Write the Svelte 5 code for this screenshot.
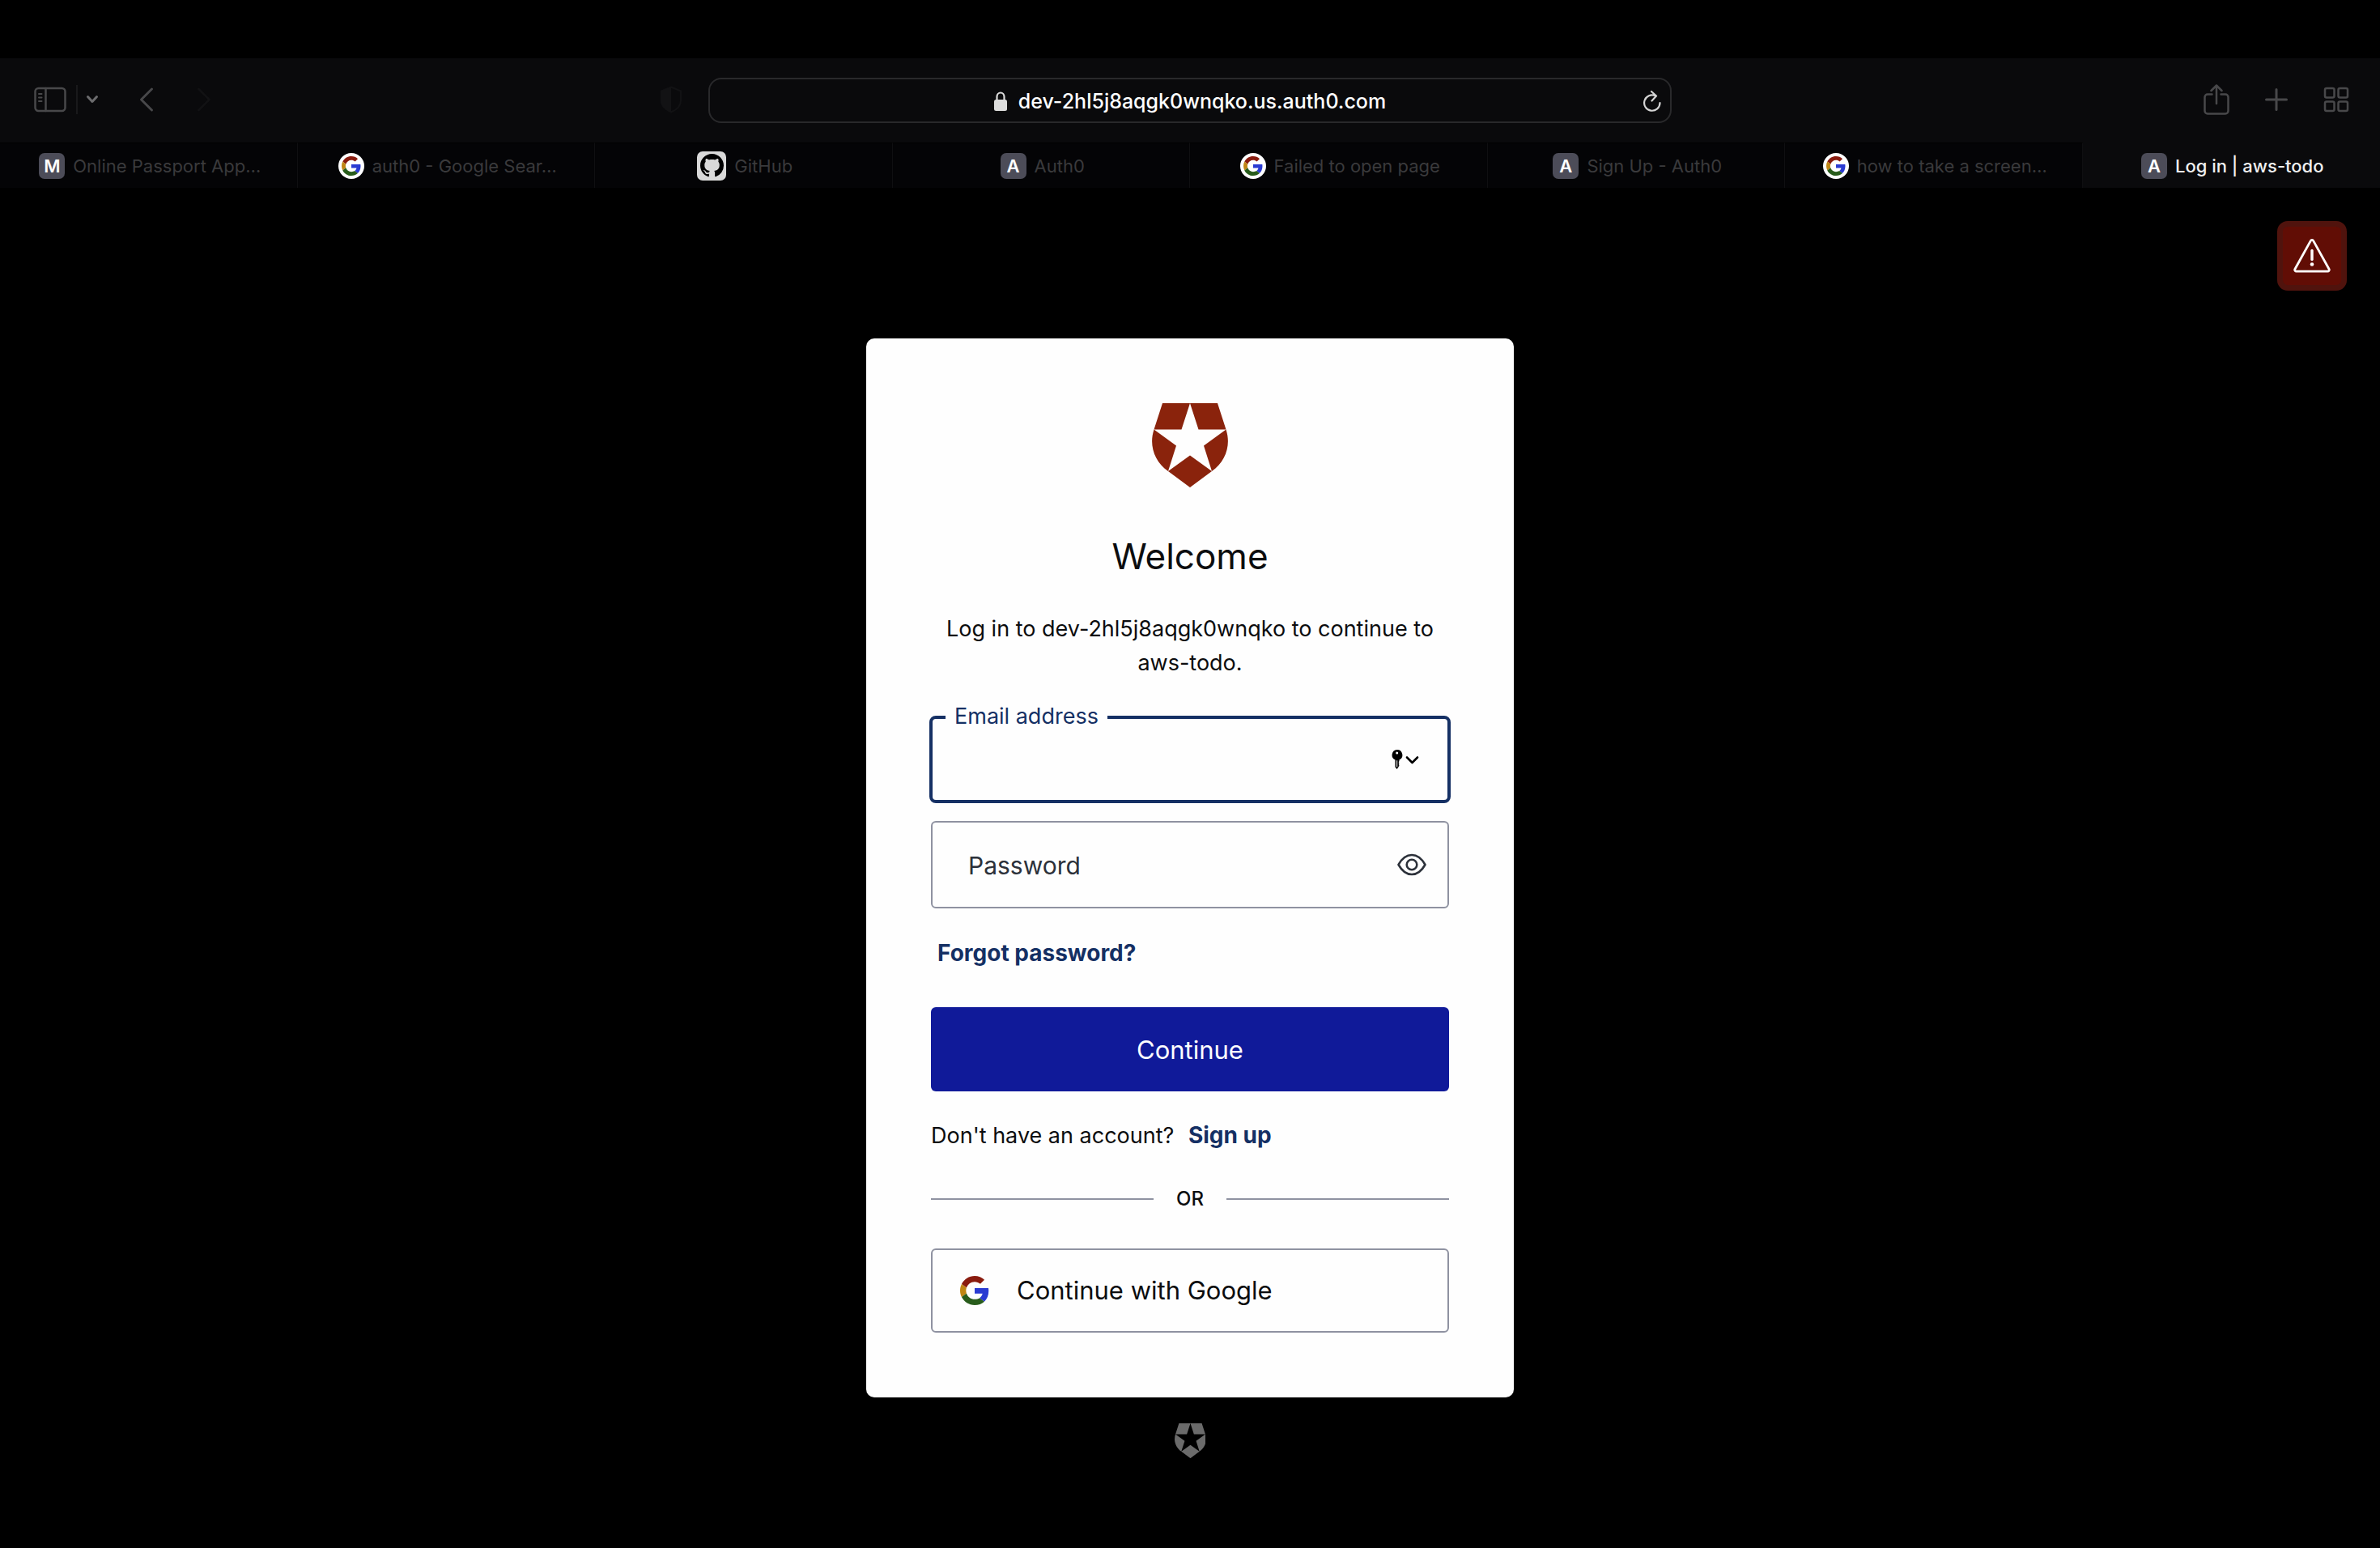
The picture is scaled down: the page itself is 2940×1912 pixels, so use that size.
<script>
  const tabs = [
    { icon: 'M', title: 'Online Passport App…' },
    { icon: 'google', title: 'auth0 - Google Sear…' },
    { icon: 'github', title: 'GitHub' },
    { icon: 'A', title: 'Auth0' },
    { icon: 'google', title: 'Failed to open page' },
    { icon: 'A', title: 'Sign Up - Auth0' },
    { icon: 'google', title: 'how to take a screen…' },
    { icon: 'A', title: 'Log in | aws-todo', active: true }
  ];
  let email = $state('');
  let password = $state('');
</script>

{#snippet google()}
  <svg class="g" viewBox="0 0 48 48" aria-hidden="true">
    <path fill="#8a1c0f" d="M24 9.5c3.54 0 6.71 1.22 9.21 3.6l6.85-6.85C35.9 2.38 30.47 0 24 0 14.62 0 6.51 5.38 2.56 13.22l7.98 6.19C12.43 13.72 17.74 9.5 24 9.5z" />
    <path fill="#2a3bd2" d="M46.98 24.55c0-1.57-.15-3.09-.38-4.55H24v9.02h12.94c-.58 2.96-2.26 5.48-4.78 7.18l7.73 6c4.51-4.18 7.09-10.36 7.09-17.65z" />
    <path fill="#c08614" d="M10.53 28.59c-.48-1.45-.76-2.99-.76-4.59s.27-3.14.76-4.59l-7.98-6.19C.92 16.46 0 20.12 0 24c0 3.88.92 7.54 2.56 10.78l7.97-6.19z" />
    <path fill="#285c1b" d="M24 48c6.48 0 11.93-2.13 15.89-5.81l-7.73-6c-2.15 1.45-4.92 2.3-8.16 2.3-6.26 0-11.57-4.22-13.47-9.91l-7.98 6.19C6.51 42.62 14.62 48 24 48z" />
  </svg>
{/snippet}

{#snippet shield()}
  <svg viewBox="0 0 94 104" fill="currentColor" aria-hidden="true">
    <path d="M13 0H47L36.500 32.500H2.500zM47 0H81L91.500 32.500H57.500zM2.500 32.500L30 52.500 20 84C3 72 -4 52 2.500 32.500zM91.500 32.500L64 52.500 74 84C91 72 98 52 91.500 32.500zM47 64.500L74 84 47 104 20 84z" />
  </svg>
{/snippet}

<div class="page">
  <header>
    <div class="toolbar">
      <div class="group left">
        <button class="side" aria-label="Show sidebar">
          <svg width="40" height="32" viewBox="0 0 40 32" fill="none" stroke="currentColor" stroke-width="2.500" stroke-linecap="round"><rect x="1.500" y="2" width="37" height="28" rx="4" /><path d="M14.500 2v28" /><path d="M6 9h3.500M6 13.500h3.500M6 18h3.500" stroke-width="2" /></svg>
        </button>
        <span class="rule"></span>
        <button class="drop" aria-label="Tab groups">
          <svg width="16" height="12" viewBox="0 0 16 12" fill="none" stroke="currentColor" stroke-width="3" stroke-linecap="round" stroke-linejoin="round"><path d="M2.500 2.500L8 8.500l5.500-6" /></svg>
        </button>
        <button class="back" aria-label="Back">
          <svg width="18" height="32" viewBox="0 0 18 32" fill="none" stroke="currentColor" stroke-width="3" stroke-linecap="round" stroke-linejoin="round"><path d="M15.500 3L2.500 16l13 13" /></svg>
        </button>
        <button class="forward" aria-label="Forward">
          <svg width="18" height="32" viewBox="0 0 18 32" fill="none" stroke="currentColor" stroke-width="2.500" stroke-linecap="round" stroke-linejoin="round"><path d="M2.500 3l13 13-13 13" /></svg>
        </button>
        <button class="privacy" aria-label="Privacy report">
          <svg width="28" height="34" viewBox="0 0 28 34" fill="none" stroke="currentColor" stroke-width="2"><path d="M14 1.500l12 5v12c0 6-5 11-12 14-7-3-12-8-12-14v-12z" /><path fill="currentColor" stroke="none" d="M14 1L1 6v13c0 6 6 11 13 14z" /></svg>
        </button>
      </div>
      <div class="address">
        <svg class="lock" width="16" height="24" viewBox="0 0 16 24" aria-hidden="true"><rect x="0" y="10" width="16" height="14" rx="2.500" fill="#dcdcdc" /><path d="M3.500 11V6.500a4.500 5 0 0 1 9 0V11" fill="none" stroke="#dcdcdc" stroke-width="2.200" /></svg>
        <span>dev-2hl5j8aqgk0wnqko.us.auth0.com</span>
        <button class="reload" aria-label="Reload">
          <svg width="24" height="28" viewBox="0 0 24 28" fill="none" stroke="currentColor" stroke-width="2.200" stroke-linecap="round" stroke-linejoin="round"><path d="M21.500 16A9.700 9.700 0 1 1 16 7.300M11 2l6 5.500-5.500 6" /></svg>
        </button>
      </div>
      <div class="group right">
        <button aria-label="Share">
          <svg width="32" height="38" viewBox="0 0 32 38" fill="none" stroke="currentColor" stroke-width="2.500" stroke-linecap="round" stroke-linejoin="round"><path d="M10.500 12.500H5a3.500 3.500 0 0 0-3.500 3.500v17A3.500 3.500 0 0 0 5 36.500h22a3.500 3.500 0 0 0 3.500-3.500V16a3.500 3.500 0 0 0-3.500-3.500h-5.500M16 24V2M9.500 8L16 1.500 22.500 8" /></svg>
        </button>
        <button aria-label="New tab">
          <svg width="28" height="28" viewBox="0 0 28 28" fill="none" stroke="currentColor" stroke-width="3" stroke-linecap="round"><path d="M14 1.500v25M1.500 14h25" /></svg>
        </button>
        <button aria-label="Tab overview">
          <svg width="32" height="32" viewBox="0 0 32 32" fill="none" stroke="currentColor" stroke-width="2.500"><rect x="2" y="2" width="11.500" height="11.500" rx="2" /><rect x="18.500" y="2" width="11.500" height="11.500" rx="2" /><rect x="2" y="18.500" width="11.500" height="11.500" rx="2" /><rect x="18.500" y="18.500" width="11.500" height="11.500" rx="2" /></svg>
        </button>
      </div>
    </div>
    <nav class="tabs" aria-label="Open tabs">
      {#each tabs as tab}
        <button class="tab" class:active={tab.active}>
          {#if tab.icon === 'google'}
            <span class="badge round">{@render google()}</span>
          {:else if tab.icon === 'github'}
            <span class="badge github">
              <svg viewBox="0 0 16 16" aria-hidden="true"><path fill="#000" d="M8 0C3.580 0 0 3.580 0 8c0 3.540 2.290 6.530 5.470 7.590.4.070.55-.17.55-.38 0-.19-.01-.82-.01-1.490-2.010.37-2.530-.49-2.690-.94-.09-.23-.48-.94-.82-1.130-.28-.15-.68-.52-.01-.53.63-.01 1.080.58 1.230.82.72 1.210 1.870.87 2.330.66.07-.52.28-.87.51-1.070-1.780-.2-3.640-.89-3.640-3.950 0-.87.31-1.590.82-2.150-.08-.2-.36-1.020.08-2.120 0 0 .67-.21 2.200.82.64-.18 1.320-.27 2-.27s1.360.09 2 .27c1.530-1.040 2.200-.82 2.200-.82.44 1.100.16 1.920.08 2.120.51.56.82 1.270.82 2.150 0 3.070-1.870 3.750-3.650 3.950.29.25.54.73.54 1.480 0 1.070-.01 1.930-.01 2.200 0 .21.15.46.55.38A8.010 8.010 0 0 0 16 8c0-4.420-3.580-8-8-8z" /></svg>
            </span>
          {:else}
            <span class="badge">{tab.icon}</span>
          {/if}
          <span>{tab.title}</span>
        </button>
      {/each}
    </nav>
  </header>

  <main>
    <button class="alert" aria-label="Development keys warning">
      <svg width="46" height="42" viewBox="0 0 46 42" fill="none" stroke="#fff" stroke-width="2.800" stroke-linecap="round" stroke-linejoin="round"><path d="M21.200 2.600L2 37.200a2 2 0 0 0 1.800 3h38.400a2 2 0 0 0 1.800-3L24.800 2.600a2 2 0 0 0-3.600 0z" /><path d="M23 14.500v11" stroke-width="3.400" /><circle cx="23" cy="31.500" r="2.300" fill="#fff" stroke="none" /></svg>
    </button>

    <section class="card">
      <div class="logo">{@render shield()}</div>
      <h1>Welcome</h1>
      <p class="intro">Log in to dev-2hl5j8aqgk0wnqko to continue to aws-todo.</p>
      <form onsubmit={(e) => e.preventDefault()}>
        <div class="field focused">
          <input id="email" type="email" bind:value={email} />
          <label for="email">Email address</label>
          <button type="button" class="adorn keys" aria-label="Saved passwords">
            <svg width="34" height="24" viewBox="0 0 34 24" aria-hidden="true"><path fill="#000" fill-rule="evenodd" d="M6.700 0a6.600 6.600 0 0 1 2.800 12.600V14l-.8 1.200.8 1.300-.8 1.200.8 1.300-.8 2L6.700 24l-2.200-2.500v-8.900A6.600 6.600 0 0 1 6.700 0zm0 2.400a1.500 1.500 0 1 0 0 3 1.500 1.500 0 0 0 0-3zM6.200 13.200v8h1v-8z" /><path d="M19 9.500l6.500 6.500 6.500-6.500" fill="none" stroke="#000" stroke-width="2.600" stroke-linecap="round" stroke-linejoin="round" /></svg>
          </button>
        </div>
        <div class="field">
          <input id="password" type="password" bind:value={password} />
          <label for="password">Password</label>
          <button type="button" class="adorn eye" aria-label="Show password">
            <svg width="36" height="28" viewBox="0 0 36 28" fill="none" stroke="currentColor" stroke-width="2.600" stroke-linejoin="round"><path d="M1.500 14C6 6 11.500 2 18 2s12 4 16.500 12C30 22 24.500 26 18 26S6 22 1.500 14z" /><circle cx="18" cy="14" r="6.300" /></svg>
          </button>
        </div>
        <a class="link forgot" href="#reset">Forgot password?</a>
        <button class="primary" type="submit">Continue</button>
      </form>
      <p class="signup">Don't have an account? <a class="link" href="#signup">Sign up</a></p>
      <div class="or"><span>OR</span></div>
      <button class="social">{@render google()}<span>Continue with Google</span></button>
    </section>
    <div class="footmark">{@render shield()}</div>
  </main>
</div>

<style>
  :global(body) { background: #000; }
  .page, .page * { box-sizing: border-box; }
  .page {
    min-height: 100vh;
    padding-top: 72px;
    background: #000;
    font-family: Inter, "Liberation Sans", sans-serif;
    color: #0c0d0f;
  }
  button { border: 0; padding: 0; background: none; font: inherit; color: inherit; }
  svg { display: block; }

  header { background: #0a0a0c; }
  .toolbar {
    display: grid;
    grid-template-columns: 1fr minmax(0, 1190px) 1fr;
    height: 104px;
    align-items: center;
    color: #48484a;
  }
  .group { display: flex; align-items: center; padding-bottom: 2px; }
  .left { padding-left: 42px; padding-right: 32px; }
  .rule { width: 2px; height: 36px; margin: 0 10px 0 12px; background: #19191b; }
  .drop { color: #6c6c6e; margin-right: 50px; }
  .forward { margin-left: 53px; color: #121214; }
  .privacy { margin-left: auto; color: #121214; }
  .right { justify-content: flex-end; gap: 44px; padding-right: 38px; }
  .address {
    display: flex;
    align-items: center;
    gap: 14px;
    height: 56px;
    padding: 2px 10px 0 48px;
    border: 2px solid #29292b;
    border-radius: 16px;
    color: #fff;
    font-size: 25px;
    font-weight: 500;
  }
  .lock { margin-left: auto; }
  .reload { margin-left: auto; color: #d4d4d4; }

  .tabs { display: grid; grid-template-columns: repeat(8, 1fr); height: 56px; }
  .tab {
    display: flex;
    align-items: center;
    justify-content: center;
    gap: 10px;
    min-width: 0;
    padding-left: 4px;
    white-space: nowrap;
    font-size: 22px;
    color: #3a3a3c;
    background: #040406;
    border-top: 1px solid #000;
    border-right: 1px solid #0f0f11;
  }
  .tab.active { background: none; border-color: transparent; color: #f0f0f0; font-weight: 500; }
  .badge {
    display: grid;
    place-items: center;
    width: 32px;
    height: 32px;
    border-radius: 7px;
    background: #4c4c58;
    color: #fff;
    font-size: 22px;
    font-weight: 600;
  }
  .round { border-radius: 50%; background: #fff; }
  .round .g { width: 24px; height: 24px; }
  .github { width: 36px; height: 36px; background: #d9d9d9; }
  .github svg { width: 29px; height: 29px; }

  main { position: relative; padding-top: 186px; }
  .alert {
    position: absolute;
    top: 41px;
    right: 41px;
    display: grid;
    place-items: center;
    width: 86px;
    height: 86px;
    border: 7px solid #50130d;
    border-radius: 13px;
    background: #610d05;
  }
  .card {
    width: 100%;
    max-width: 800px;
    margin: 0 auto;
    padding: 80px;
    border-radius: 10px;
    background: #fefefe;
    font-size: 27px;
    line-height: 42px;
  }
  .logo { width: 94px; margin: 0 auto; color: #8a230c; }
  h1 { margin: 56px 0 40px; font-size: 44px; line-height: 58px; font-weight: 400; text-align: center; }
  p { margin: 0; }
  .intro { text-align: center; margin-bottom: 44px; }
  form { display: flex; flex-direction: column; }
  .field { position: relative; height: 108px; }
  .field input {
    width: 100%;
    height: 100%;
    padding: 0 80px 0 44px;
    border: 2px solid #8f92a1;
    border-radius: 6px;
    background: transparent;
    font: inherit;
    font-size: 30px;
    outline: none;
  }
  .field label { position: absolute; left: 46px; top: 34px; font-size: 30px; color: #2c313a; }
  .focused { margin: 0 -2px 22px; }
  .focused input { border: 4px solid #153064; border-radius: 8px; }
  .focused label { left: 20px; top: -20px; padding: 0 11px; background: #fefefe; font-size: 27px; color: #153064; }
  .adorn { position: absolute; top: 0; bottom: 0; }
  .keys { right: 39px; }
  .eye { right: 28px; color: #2c313a; }
  .link { color: #153064; font-size: 28px; font-weight: 700; text-decoration: none; }
  .forgot { align-self: flex-start; margin: 34px 0 46px 8px; }
  .primary { height: 104px; padding-top: 2px; border-radius: 6px; background: #101a99; color: #fff; font-size: 31px; }
  .signup { margin: 33px 0 36px; }
  .signup .link { margin-left: 10px; }
  .or { display: flex; align-items: center; gap: 28px; font-size: 24px; font-weight: 500; }
  .or::before, .or::after { content: ""; flex: 1; height: 2px; background: #8f92a1; }
  .social {
    display: flex;
    align-items: center;
    gap: 34px;
    width: 100%;
    height: 104px;
    margin-top: 40px;
    padding: 0 34px;
    border: 2px solid #8f92a1;
    border-radius: 6px;
    font-size: 31px;
  }
  .social .g { width: 36px; height: 36px; }
  .footmark { width: 39px; margin: 32px auto 0; color: #6b6b6b; }
</style>
